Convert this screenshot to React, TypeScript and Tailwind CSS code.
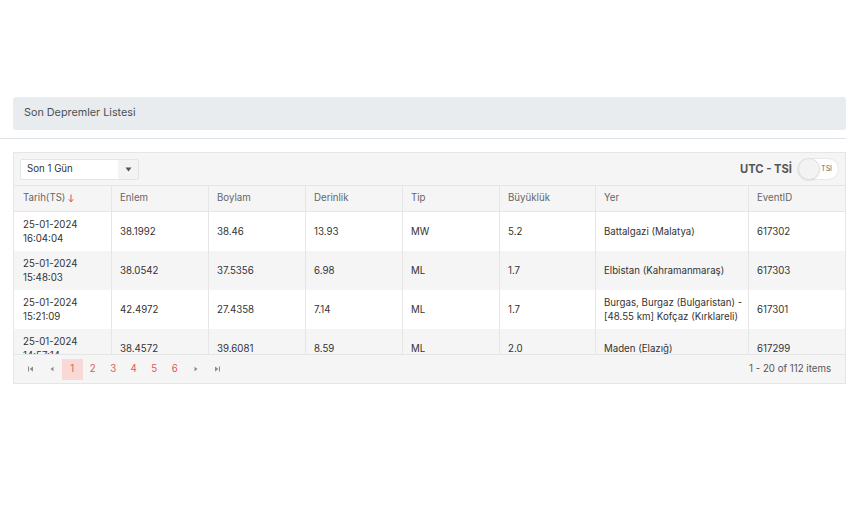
type Row = {
    date: string;
    time: string;
    lat: string;
    lon: string;
    depth: string;
    type: string;
    mag: string;
    place: string[];
    id: string;
};

const rows: Row[] = [
    { date: "25-01-2024", time: "16:04:04", lat: "38.1992", lon: "38.46", depth: "13.93", type: "MW", mag: "5.2", place: ["Battalgazi (Malatya)"], id: "617302" },
    { date: "25-01-2024", time: "15:48:03", lat: "38.0542", lon: "37.5356", depth: "6.98", type: "ML", mag: "1.7", place: ["Elbistan (Kahramanmaraş)"], id: "617303" },
    { date: "25-01-2024", time: "15:21:09", lat: "42.4972", lon: "27.4358", depth: "7.14", type: "ML", mag: "1.7", place: ["Burgas, Burgaz (Bulgaristan) -", "[48.55 km] Kofçaz (Kırklareli)"], id: "617301" },
    { date: "25-01-2024", time: "14:57:14", lat: "38.4572", lon: "39.6081", depth: "8.59", type: "ML", mag: "2.0", place: ["Maden (Elazığ)"], id: "617299" },
];

const columns = ["Enlem", "Boylam", "Derinlik", "Tip", "Büyüklük", "Yer", "EventID"];
const gridCols = "grid grid-cols-[97px_97px_97px_97px_97px_96px_153px_97px]";

const PagerIcon = ({ kind }: { kind: "first" | "prev" | "next" | "last" }) => (
    <svg width="8" height="8" viewBox="0 0 8 8" className="text-[#8a8a8a]" fill="currentColor">
        {kind === "first" && (<><rect x="1" y="1.5" width="1" height="5" /><path d="M6 1.5 L2.6 4 L6 6.5 Z" /></>)}
        {kind === "prev" && <path d="M5.5 1.8 L2.5 4 L5.5 6.2 Z" />}
        {kind === "next" && <path d="M2.5 1.8 L5.5 4 L2.5 6.2 Z" />}
        {kind === "last" && (<><path d="M2 1.5 L5.4 4 L2 6.5 Z" /><rect x="6" y="1.5" width="1" height="5" /></>)}
    </svg>
);

export default function App() {
    return (
        <div className="w-[850px] h-[520px] bg-white pt-[97px] font-['Inter','Liberation_Sans',sans-serif] text-[#333]">
            {/* Başlık */}
            <div className="ml-[13px] w-[833px] h-[33px] rounded-[3px] bg-[#e9ecef] flex items-center pl-[11px]">
                <span className="text-[10.8px] text-[#495057]">Son Depremler Listesi</span>
            </div>
            <div className="mt-[8px] w-[846px] border-t border-[#dee2e6]" />

            {/* Grid */}
            <div className="ml-[13px] mt-[13px] w-[833px] border border-[#e6e6e6] bg-white overflow-hidden">
                {/* Toolbar */}
                <div className="h-[33px] bg-[#f5f5f5] flex items-center justify-between pl-[6px] pr-[6px] border-b border-[#e6e6e6]">
                    <div className="w-[119px] h-[21px] bg-white border border-[#e4e4e4] rounded-[2px] flex items-center">
                        <span className="flex-1 pl-[6px] text-[9.7px] text-[#333]">Son 1 Gün</span>
                        <span className="w-[20px] h-full bg-[#f3f3f3] flex items-center justify-center">
                            <svg width="7" height="5" viewBox="0 0 7 5"><path d="M0.5 0.5 L6.5 0.5 L3.5 4.5 Z" fill="#555" /></svg>
                        </span>
                    </div>
                    <div className="flex items-center gap-[5px]">
                        <span className="text-[11.2px] font-bold text-[#555]">UTC - TSİ</span>
                        <div className="w-[42px] h-[22px] rounded-full bg-white border border-[#e8e8e8] flex items-center relative">
                            <span className="absolute left-0 top-[-1px] w-[22px] h-[22px] rounded-full bg-[#f3f3f3] border border-[#e0e0e0] shadow-[0_1px_2px_rgba(0,0,0,0.08)]" />
                            <span className="ml-auto mr-[6px] text-[7px] text-[#666]">TSI</span>
                        </div>
                    </div>
                </div>

                {/* Başlık satırı */}
                <div className={`${gridCols} h-[26px] bg-[#f5f5f5] border-b border-[#e6e6e6] text-[9.7px] text-[#666]`}>
                    <div className="flex items-center pl-[9px] gap-[3px]">
                        Tarih(TS)
                        <svg width="6" height="9" viewBox="0 0 6 9"><path d="M3 0.5 V7.5 M0.8 5.3 L3 7.8 L5.2 5.3" stroke="#e74c3c" strokeWidth="1" fill="none" /></svg>
                    </div>
                    {columns.map((c) => (
                        <div key={c} className="flex items-center pl-[8px] border-l border-[#e6e6e6]">{c}</div>
                    ))}
                </div>

                {/* Satırlar */}
                <div className="h-[142px] overflow-hidden">
                    {rows.map((r, i) => (
                        <div key={r.id} className={`${gridCols} h-[39px] text-[9.7px] leading-[14px] text-[#333] ${i % 2 === 1 ? "bg-[#f5f5f5]" : "bg-white"}`}>
                            <div className="flex flex-col justify-center pl-[9px]">
                                <span>{r.date}</span>
                                <span>{r.time}</span>
                            </div>
                            <div className="flex items-center pl-[8px] border-l border-[#e6e6e6]">{r.lat}</div>
                            <div className="flex items-center pl-[8px] border-l border-[#e6e6e6]">{r.lon}</div>
                            <div className="flex items-center pl-[8px] border-l border-[#e6e6e6]">{r.depth}</div>
                            <div className="flex items-center pl-[8px] border-l border-[#e6e6e6]">{r.type}</div>
                            <div className="flex items-center pl-[8px] border-l border-[#e6e6e6]">{r.mag}</div>
                            <div className="flex flex-col justify-center pl-[8px] border-l border-[#e6e6e6]">
                                {r.place.map((p) => <span key={p}>{p}</span>)}
                            </div>
                            <div className="flex items-center pl-[8px] border-l border-[#e6e6e6]">{r.id}</div>
                        </div>
                    ))}
                </div>

                {/* Sayfalama */}
                <div className="h-[29px] bg-[#f5f5f5] border-t border-[#e6e6e6] flex items-center justify-between pl-[6px] pr-[14px] text-[9.7px]">
                    <div className="flex items-center">
                        <span className="w-[21px] h-[21px] flex items-center justify-center"><PagerIcon kind="first" /></span>
                        <span className="w-[21px] h-[21px] flex items-center justify-center"><PagerIcon kind="prev" /></span>
                        {["1", "2", "3", "4", "5", "6"].map((n) => (
                            <span key={n} className={`w-[20.5px] h-[21px] flex items-center justify-center text-[#e05a4f] ${n === "1" ? "bg-[#f9d9d6]" : ""}`}>{n}</span>
                        ))}
                        <span className="w-[21px] h-[21px] flex items-center justify-center"><PagerIcon kind="next" /></span>
                        <span className="w-[21px] h-[21px] flex items-center justify-center"><PagerIcon kind="last" /></span>
                    </div>
                    <span className="text-[#555]">1 - 20 of 112 items</span>
                </div>
            </div>
        </div>
    );
}
